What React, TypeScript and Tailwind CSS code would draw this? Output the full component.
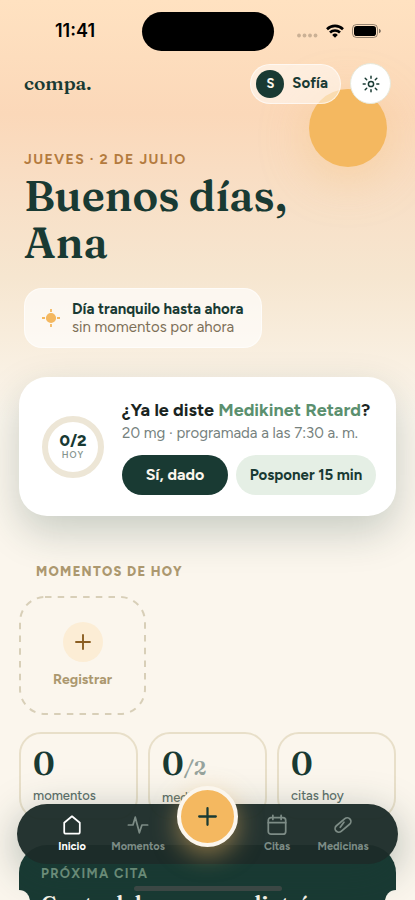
import { clsx } from 'clsx'
import type { ReactNode } from 'react'

const sans = "font-['Figtree','Lato',sans-serif]"
const serif = "font-['Fraunces','Liberation_Serif',serif]"

const stats = [
  { value: '0', total: '', label: 'momentos' },
  { value: '0', total: '/2', label: 'medicinas' },
  { value: '0', total: '', label: 'citas hoy' },
]

export default function App() {
  return (
    <div
      className={clsx(
        'relative h-screen overflow-hidden bg-[#fbf6ed] text-[#193a33]',
        sans,
      )}
    >
      <div className="absolute inset-x-0 top-0 h-[420px] bg-[linear-gradient(#ffe2c1,#fbd8b9_27%,#f8dfc6_46%,#f6e6d0_66%,#fbf6ed)]" />
      <div className="absolute top-[89px] right-7 size-[78px] rounded-full bg-[#f4b860] shadow-[0_10px_50px_rgba(244,184,96,0.35)]" />

      <div className="relative">
        <StatusBar />
        <Header />
        <main>
          <Greeting />
          <DoseCard />
          <Moments />
          <Stats />
          <NextAppointment />
        </main>
      </div>

      <TabBar />
      <div className="absolute bottom-[9px] left-1/2 h-[5px] w-[148px] -translate-x-1/2 rounded-full bg-[#3b4744]" />
    </div>
  )
}

function StatusBar() {
  return (
    <div className="relative flex h-[62px] items-center justify-between pr-[34px] pl-[55px] text-black">
      <span className="font-['Inter',sans-serif] text-lg font-semibold">11:41</span>
      <div className="absolute top-3 left-1/2 h-[39px] w-[132px] -translate-x-1/2 rounded-full bg-black" />
      <div className="flex items-center gap-2">
        <svg width="22" height="14" viewBox="0 0 22 14" fill="#cbb195">
          <circle cx="3" cy="11.5" r="1.9" />
          <circle cx="8.5" cy="11.5" r="1.9" />
          <circle cx="14" cy="11.5" r="1.9" />
          <circle cx="19.5" cy="11.5" r="1.9" />
        </svg>
        <svg width="18" height="14" viewBox="0 0 18 14" fill="none" stroke="#000" strokeWidth="2.6">
          <path d="M1 5.2a11.4 11.4 0 0 1 16 0" />
          <path d="M4 8.5a7.1 7.1 0 0 1 10 0" />
          <path d="M6.2 10.9a4 4 0 0 1 5.6 0L9 13.8z" fill="#000" stroke="none" />
        </svg>
        <svg width="29" height="14" viewBox="0 0 29 14">
          <rect x="0.5" y="0.5" width="25" height="13" rx="4" fill="none" stroke="#000" strokeOpacity="0.4" />
          <rect x="2" y="2" width="22" height="10" rx="2.8" />
          <path d="M27 4.8v4.4c1.2-.5 1.8-1.3 1.8-2.2S28.2 5.3 27 4.8z" fillOpacity="0.5" />
        </svg>
      </div>
    </div>
  )
}

function Header() {
  return (
    <header className="flex items-center justify-between px-6 pt-px">
      <a href="#inicio" className={clsx('text-[19px] font-semibold', serif)}>
        compa.
      </a>
      <div className="flex items-center gap-[9px]">
        <button className="flex h-10 items-center gap-2 rounded-full border border-white/60 bg-white/50 pr-3 pl-[5px] text-[15px] font-bold">
          <span className="flex size-7 items-center justify-center rounded-full bg-[#193a33] text-[13px] text-[#fbf6ed]">
            S
          </span>
          Sofía
        </button>
        <button
          aria-label="Ajustes"
          className="flex size-[41px] items-center justify-center rounded-full border border-[#e7e9dc] bg-white"
        >
          <svg width="18" height="18" viewBox="0 0 18 18" fill="none" stroke="currentColor" strokeWidth="1.5" strokeLinecap="round">
            <circle cx="9" cy="9" r="2.6" />
            <path d="M9 1.2v2M9 14.8v2M1.2 9h2M14.8 9h2M3.2 3.2l1.5 1.5M13.3 13.3l1.5 1.5M3.2 14.8l1.5-1.5M13.3 4.7l1.5-1.5" />
          </svg>
        </button>
      </div>
    </header>
  )
}

function Greeting() {
  return (
    <section className="px-6 pt-12">
      <p className="text-sm leading-4 font-bold tracking-widest text-[#b47b3e]">
        JUEVES · 2 DE JULIO
      </p>
      <h1 className={clsx('mt-1 text-[43px] leading-[47px] font-semibold', serif)}>
        Buenos días,
        <br />
        Ana
      </h1>
      <div className="mt-[22px] flex w-fit items-center gap-[11px] rounded-[18px] border border-white/60 bg-white/65 py-[11px] pr-[18px] pl-4">
        <svg width="20" height="20" viewBox="0 0 20 20" fill="#f4b860" stroke="#f4b860" strokeWidth="1.8">
          <circle cx="10" cy="10" r="4.2" />
          <path d="M10 1v3M10 16v3M1 10h3M16 10h3" />
        </svg>
        <div className="text-[15px] leading-[18px]">
          <p className="font-bold">Día tranquilo hasta ahora</p>
          <p className="text-[#7d7058]">sin momentos por ahora</p>
        </div>
      </div>
    </section>
  )
}

function DoseCard() {
  return (
    <section className="mx-[19px] mt-[29px] flex items-center gap-[18px] rounded-[28px] bg-white py-[21px] pr-5 pl-[23px] shadow-[0_16px_40px_rgba(25,58,51,0.22)]">
      <div className="flex size-[62px] shrink-0 flex-col items-center justify-center rounded-full border-[6px] border-[#ede6d6]">
        <span className="text-base leading-4 font-extrabold">0/2</span>
        <span className="text-[9px] leading-3 font-semibold tracking-[1px] text-[#85958f]">HOY</span>
      </div>
      <div className="min-w-0 flex-1 whitespace-nowrap">
        <h2 className="text-lg leading-6 font-bold text-[#1a2421]">
          ¿Ya le diste <span className="text-[#5b906f]">Medikinet Retard</span>?
        </h2>
        <p className="text-[15px] leading-[22px] text-[#76827e]">
          20 mg · programada a las 7:30 a. m.
        </p>
        <div className="mt-[11px] flex gap-2">
          <button className="h-10 w-[106px] rounded-full bg-[#193a33] text-base font-bold text-[#fbf6ed]">
            Sí, dado
          </button>
          <button className="h-10 flex-1 rounded-full bg-[#e5efe5] text-[15px] font-bold">
            Posponer 15 min
          </button>
        </div>
      </div>
    </section>
  )
}

function Moments() {
  return (
    <section className="px-[19px] pt-12">
      <h2 className="pl-[17px] text-[13px] leading-4 font-extrabold tracking-widest text-[#ac986f]">
        MOMENTOS DE HOY
      </h2>
      <button className="relative mt-4 flex h-[119px] w-[127px] flex-col items-center justify-center gap-2 text-sm leading-5 font-bold text-[#ac986f]">
        <svg className="absolute inset-0 size-full" fill="none">
          <rect x="1" y="1" width="125" height="117" rx="25" stroke="#d8cfb8" strokeWidth="2" strokeDasharray="6.5 6.2" />
        </svg>
        <span className="flex size-10 items-center justify-center rounded-full bg-[#fcedd5] text-[#8b5e22]">
          <PlusIcon size={16} />
        </span>
        Registrar
      </button>
    </section>
  )
}

function Stats() {
  return (
    <section className="grid grid-cols-3 gap-[10px] px-[19px] pt-[17px]">
      {stats.map(({ value, total, label }) => (
        <div key={label} className="h-[88px] rounded-[22px] border-2 border-[#e8dfc9] px-3 pt-[14px]">
          <p className={clsx('text-[32px] leading-8 font-semibold', serif)}>
            {value}
            {total && <span className="text-xl text-[#96a39d]">{total}</span>}
          </p>
          <p className="mt-2 text-[13px] leading-4 font-medium text-[#5d706a]">{label}</p>
        </div>
      ))}
    </section>
  )
}

function NextAppointment() {
  return (
    <section className="relative mx-[19px] mt-[25px] h-[200px] rounded-[28px] bg-[#193a33] px-[22px] pt-[21px]">
      {/* ticket notches */}
      <span className="absolute top-[45px] -left-[11px] size-[22px] rounded-full bg-[#fbf6ed]" />
      <span className="absolute top-[45px] -right-[11px] size-[22px] rounded-full bg-[#fbf6ed]" />
      <p className="text-[13px] leading-4 font-bold tracking-widest text-[#7b9c86]">PRÓXIMA CITA</p>
      <h2 className={clsx('mt-2 text-[22px] leading-7 font-semibold whitespace-nowrap text-[#fbf6ed]', serif)}>
        Control de neuropediatría
      </h2>
    </section>
  )
}

function TabBar() {
  return (
    <nav className="absolute inset-x-[17px] bottom-9 flex h-[60px] items-center rounded-full bg-[#1c2c29]/96 px-[22px] shadow-[0_10px_40px_rgba(25,58,51,0.35)]">
      <Tab label="Inicio" active>
        <path d="M3.5 9.5 12 2.5l8.5 7v10a2 2 0 0 1-2 2h-13a2 2 0 0 1-2-2z" />
      </Tab>
      <Tab label="Momentos">
        <path d="M1.5 12h5L9 3.5l4.500 17 2.800-8.500h6.200" />
      </Tab>
      <button
        aria-label="Agregar"
        className="mx-[6px] mb-9 flex size-[61px] shrink-0 items-center justify-center rounded-full border-4 border-[#fbf6ed] bg-[#f4b860] shadow-[0_8px_24px_rgba(244,184,96,0.5)]"
      >
        <PlusIcon size={19} />
      </button>
      <Tab label="Citas">
        <rect x="2.5" y="4" width="19" height="18" rx="3" />
        <path d="M2.5 9.5h19M7.5 1.5V6M16.5 1.5V6" />
      </Tab>
      <Tab label="Medicinas">
        <rect x="2" y="8" width="20" height="8" rx="4" transform="rotate(-40 12 12)" />
        <path d="m9 14.5 4-5.500" />
      </Tab>
    </nav>
  )
}

function Tab({ label, active = false, children }: { label: string; active?: boolean; children: ReactNode }) {
  return (
    <a
      href={`#${label.toLowerCase()}`}
      className={clsx(
        'flex min-w-0 flex-1 flex-col items-center gap-[3px] pt-px text-[11px] leading-4 font-bold',
        active ? 'text-white' : 'text-[#7d8c86]',
      )}
    >
      <svg width="22" height="22" viewBox="0 0 24 24" fill="none" stroke="currentColor" strokeWidth="1.9" strokeLinecap="round" strokeLinejoin="round">
        {children}
      </svg>
      {label}
    </a>
  )
}

function PlusIcon({ size }: { size: number }) {
  return (
    <svg width={size} height={size} viewBox="0 0 16 16" fill="none" stroke="currentColor" strokeWidth="1.9" strokeLinecap="round">
      <path d="M8 1v14M1 8h14" />
    </svg>
  )
}
